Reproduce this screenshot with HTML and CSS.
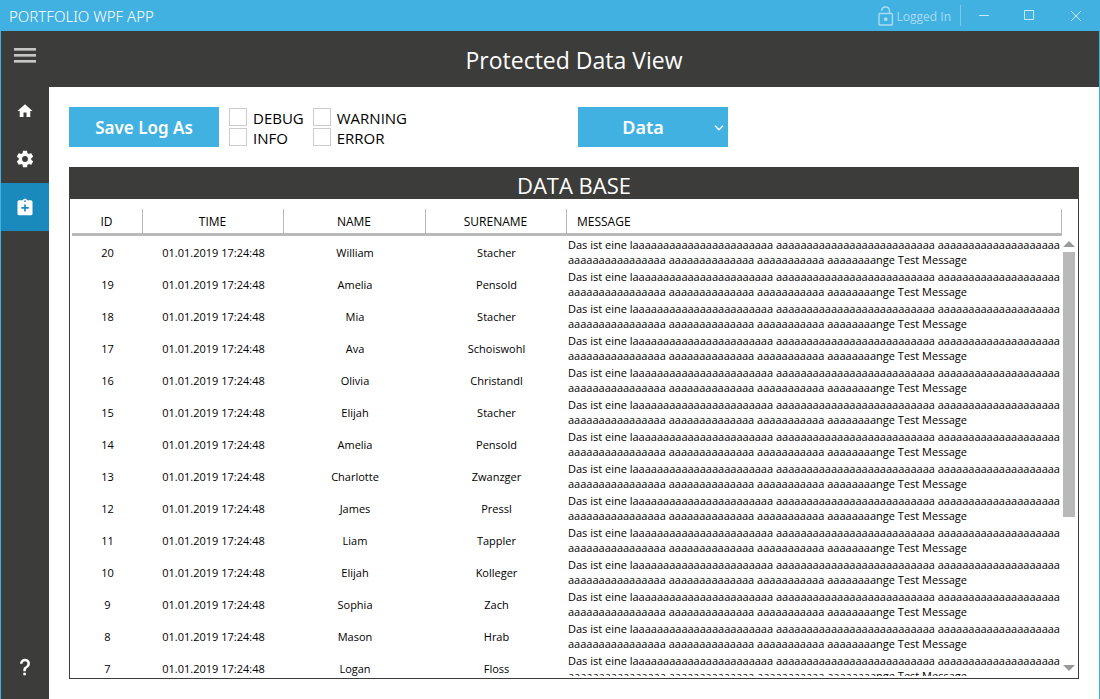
FILE: index.html
```
<!DOCTYPE html>
<html lang="en">
<head>
<meta charset="utf-8">
<title>Portfolio WPF App</title>
<link rel="stylesheet" href="styles.css">
</head>
<body>
<div class="window">
  <header class="titlebar">
    <span class="app-name">PORTFOLIO WPF APP</span>
    <div class="session">
      <svg class="lock" width="16" height="20" viewBox="0 0 16 20" fill="none" stroke="currentColor" stroke-width="1.4" aria-hidden="true"><rect x="1" y="7.5" width="13.4" height="11.5" rx=".8"/><path d="M3.7 4.8C3.7 2.4 5.300 1 7.500 1S11.500 2.500 11.500 4.900V7.500"/><circle cx="7.700" cy="13.200" r="1.200" fill="currentColor"/></svg>
      <span>Logged In</span>
    </div>
    <div class="window-buttons">
      <button type="button" aria-label="Minimize"><svg width="12" height="12" viewBox="0 0 12 12" aria-hidden="true"><path d="M1 5.500H11"/></svg></button>
      <button type="button" aria-label="Maximize"><svg width="12" height="12" viewBox="0 0 12 12" aria-hidden="true"><path d="M.5 .5H9.500V9.500H.5Z"/></svg></button>
      <button type="button" aria-label="Close"><svg width="12" height="12" viewBox="0 0 12 12" aria-hidden="true"><path d="M1 1L11 11M11 1L1 11"/></svg></button>
    </div>
  </header>
  <div class="page-head">
    <button type="button" class="menu-toggle" aria-label="Menu"><span></span><span></span><span></span></button>
    <h1>Protected Data View</h1>
  </div>
  <div class="workspace">
    <nav class="sidebar">
      <a href="#home" aria-label="Home"><svg width="18" height="18" viewBox="0 0 24 24" aria-hidden="true"><path d="M10 20V14H14V20H19V12H22L12 3L2 12H5V20Z"/></svg></a>
      <a href="#settings" aria-label="Settings"><svg width="20" height="20" viewBox="0 0 24 24" aria-hidden="true"><path d="M12 15.500A3.500 3.500 0 0 1 8.500 12A3.500 3.500 0 0 1 12 8.500A3.500 3.500 0 0 1 15.500 12A3.500 3.500 0 0 1 12 15.500M19.430 12.970C19.470 12.650 19.500 12.330 19.500 12S19.470 11.340 19.430 11L21.540 9.370C21.730 9.220 21.780 8.950 21.660 8.730L19.660 5.270C19.540 5.050 19.270 4.960 19.050 5.050L16.560 6.050C16.040 5.660 15.500 5.320 14.870 5.070L14.500 2.420C14.460 2.180 14.250 2 14 2H10C9.750 2 9.540 2.180 9.500 2.420L9.130 5.070C8.500 5.320 7.960 5.660 7.440 6.050L4.950 5.050C4.730 4.960 4.460 5.050 4.340 5.270L2.340 8.730C2.210 8.950 2.270 9.220 2.460 9.370L4.570 11C4.530 11.340 4.500 11.670 4.500 12S4.530 12.650 4.570 12.970L2.460 14.630C2.270 14.780 2.210 15.050 2.340 15.270L4.340 18.730C4.460 18.950 4.730 19.030 4.950 18.950L7.440 17.940C7.960 18.340 8.500 18.680 9.130 18.930L9.500 21.580C9.540 21.820 9.750 22 10 22H14C14.250 22 14.460 21.820 14.500 21.580L14.870 18.930C15.500 18.670 16.040 18.340 16.560 17.940L19.050 18.950C19.270 19.030 19.540 18.950 19.660 18.730L21.660 15.270C21.780 15.050 21.730 14.780 21.540 14.630Z"/></svg></a>
      <a href="#data" class="active" aria-label="Protected data" aria-current="page"><svg width="20" height="20" viewBox="0 -1 24 24" fill-rule="evenodd" aria-hidden="true"><path d="M19 3H14.820C14.400 1.840 13.300 1 12 1S9.600 1.840 9.180 3H5A2 2 0 0 0 3 5V19A2 2 0 0 0 5 21H19A2 2 0 0 0 21 19V5A2 2 0 0 0 19 3M12 3A1 1 0 1 1 12 5A1 1 0 1 1 12 3M11 8H13V11H16.500V13H13V16.500H11V13H7.500V11H11Z"/></svg></a>
      <a href="#help" class="help" aria-label="Help"><svg width="20" height="20" viewBox="0 0 24 24" aria-hidden="true"><path d="M10 19H13V22H10V19M12 2C17.350 2.220 19.680 7.620 16.500 11.670C15.670 12.670 14.330 13.330 13.670 14.170C13 15 13 16 13 17H10C10 15.330 10 13.920 10.670 12.920C11.330 11.920 12.670 11.330 13.500 10.670C15.920 8.430 15.320 5.260 12 5A3 3 0 0 0 9 8H6A6 6 0 0 1 12 2Z"/></svg></a>
    </nav>
    <main class="content">
      <div class="toolbar">
        <div class="log-tools">
          <button type="button" class="save">Save Log As</button>
          <div class="levels">
            <label><input type="checkbox">DEBUG</label>
            <label><input type="checkbox">WARNING</label>
            <label><input type="checkbox">INFO</label>
            <label><input type="checkbox">ERROR</label>
          </div>
        </div>
        <div class="source">
          <select aria-label="Data source"><option>Data</option></select>
          <svg width="10" height="6" viewBox="0 0 10 6" aria-hidden="true"><path d="M1 .8L5 4.800L9 .8"/></svg>
        </div>
      </div>
      <section class="panel">
        <h2>DATA BASE</h2>
        <div class="grid">
          <div class="rows">
            <table>
              <colgroup><col class="c-id"><col class="c-time"><col class="c-name"><col class="c-surname"><col></colgroup>
              <thead><tr><th>ID</th><th>TIME</th><th>NAME</th><th>SURENAME</th><th class="msg">MESSAGE</th></tr></thead>
              <tbody id="log"></tbody>
            </table>
          </div>
          <div class="scrollbar" aria-hidden="true"><i class="up"></i><div class="track"><div class="thumb"></div></div><i class="down"></i></div>
        </div>
      </section>
    </main>
  </div>
</div>
<script src="app.js"></script>
</body>
</html>
```
FILE: styles.css
```
* { box-sizing: border-box; }
body { margin: 0; background: #fff; color: #000; font-family: "Open Sans", "Noto Sans", sans-serif; }
button, select, input { font-family: inherit; margin: 0; border: 0; border-radius: 0; }
.window { display: flex; flex-direction: column; height: 100vh; border: solid #41b1e1; border-width: 0 1px; }
.titlebar { display: flex; align-items: center; flex: none; height: 31px; padding: 0 0 0 8px; background: #41b1e1; color: #fff; }
.app-name { flex: 1; padding-top: 2px; font-family: "Noto Sans", sans-serif; font-size: 15px; font-weight: 300; line-height: 29px; }
.session { display: flex; align-items: center; gap: 3px; padding-right: 9px; color: #a9dcf2; font-size: 12px; border-right: 1px solid #7ac8ea; line-height: 15px; }
.session span { padding-top: 2px; line-height: 13px; }
.lock { display: block; flex: none; margin: 1px 0 0; }
.window-buttons { display: flex; }
.window-buttons button { display: grid; place-items: center; width: 46px; height: 31px; padding: 0; background: none; color: #c9eaf7; }
.window-buttons svg { fill: none; stroke: currentColor; stroke-width: 1; }
.page-head { display: flex; align-items: center; flex: none; height: 56px; background: #3c3c3a; color: #fff; }
.menu-toggle { display: flex; flex-direction: column; align-self: flex-start; gap: 3px; width: 48px; padding: 17px 13px; background: none; }
.menu-toggle span { display: block; height: 3px; background: #c6c6c5; border-bottom: 1px solid #969695; }
h1 { flex: 1; margin: 0; padding-top: 2px; font-size: 23px; font-weight: 400; line-height: 32px; text-align: center; }
.workspace { display: flex; flex: 1; min-height: 0; }
.sidebar { display: flex; flex-direction: column; flex: none; width: 48px; padding-bottom: 8px; background: #3c3c3a; }
.sidebar a { display: grid; place-items: center; height: 48px; color: #fff; }
.sidebar svg { fill: currentColor; }
.sidebar .active { background: #1a8abc; }
.sidebar .help { margin-top: auto; }
.content { display: flex; flex: 1; flex-direction: column; gap: 20px; min-width: 0; padding: 20px; }
.toolbar { display: grid; grid-template-columns: 1fr 1fr; gap: 8px; }
.log-tools { display: flex; gap: 10px; }
.save { width: 150px; height: 40px; padding: 0; background: #41b1e1; color: #fff; font-family: "Noto Sans", sans-serif; font-size: 17px; font-weight: 600; }
.levels { display: grid; grid-template-columns: auto auto; column-gap: 9px; align-content: center; }
.levels label { display: flex; align-items: center; gap: 6px; height: 20px; padding-top: 1px; font-size: 15px; line-height: 20px; }
.levels input { appearance: none; width: 18px; height: 18px; margin-bottom: 1px; border: 1px solid #ccc; background: #fff; }
.source { position: relative; width: 150px; height: 40px; }
.source select { appearance: none; width: 100%; height: 100%; padding: 0 20px 0 0; background: #41b1e1; color: #fff; font-family: "Noto Sans", sans-serif; font-size: 18px; font-weight: 600; text-align: center; text-align-last: center; }
.source svg { position: absolute; top: 18px; right: 4px; fill: none; stroke: #fff; stroke-width: 1.4; pointer-events: none; }
.panel { display: flex; flex: 1; flex-direction: column; min-height: 0; border: 1px solid #3c3c3a; }
h2 { flex: none; margin: 0; padding-top: 3px; background: #3c3c3a; color: #fff; font-size: 22px; font-weight: 400; line-height: 28px; text-align: center; }
.grid { display: flex; flex: 1; min-height: 0; padding: 10px 3px 2px 2px; }
.rows { flex: 1; min-width: 0; overflow: hidden; }
table { width: 100%; table-layout: fixed; border-collapse: separate; border-spacing: 0; font-size: 11px; line-height: 15px; }
.c-id { width: 71px; }
.c-time, .c-surname { width: 141px; }
.c-name { width: 142px; }
th { height: 27px; padding: 0 2px 0 0; border-bottom: 3px solid #b9b9b9; font-size: 12px; font-weight: 500; text-align: center; background: linear-gradient(#b9b9b9, #b9b9b9) right / 1px 100% no-repeat; }
th.msg { padding-left: 10px; text-align: left; }
td { height: 32px; padding: 1px 0; text-align: center; }
td.msg { padding-left: 1px; text-align: left; white-space: nowrap; }
.scrollbar { display: flex; flex-direction: column; flex: none; align-items: center; width: 12px; margin: 32px 0 5px 1px; }
.scrollbar i { border: solid transparent; border-width: 0 6px; }
.scrollbar .up { border-bottom: 6px solid #999; }
.scrollbar .down { border-top: 6px solid #999; }
.track { flex: 1; width: 100%; padding: 5px 0; }
.thumb { height: 65%; background: #b9b9b9; }
```
FILE: app.js
```
const people = [
  [20, "William", "Stacher"], [19, "Amelia", "Pensold"], [18, "Mia", "Stacher"],
  [17, "Ava", "Schoiswohl"], [16, "Olivia", "Christandl"], [15, "Elijah", "Stacher"],
  [14, "Amelia", "Pensold"], [13, "Charlotte", "Zwanzger"], [12, "James", "Pressl"],
  [11, "Liam", "Tappler"], [10, "Elijah", "Kolleger"], [9, "Sophia", "Zach"],
  [8, "Mason", "Hrab"], [7, "Logan", "Floss"]
];
const a = n => "a".repeat(n);
const message = `Das ist eine l${a(23)} ${a(26)} ${a(20)}<br>${a(16)} ${a(14)} ${a(11)} ${a(8)}nge Test Message`;
document.getElementById("log").innerHTML = people.map(([id, name, surname]) =>
  `<tr><td>${id}</td><td>01.01.2019 17:24:48</td><td>${name}</td><td>${surname}</td><td class="msg">${message}</td></tr>`
).join("");
```
